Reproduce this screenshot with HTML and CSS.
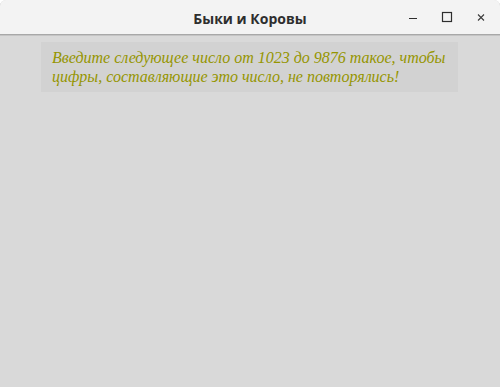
FILE: index.html
```html
<!DOCTYPE html>
<html lang="ru">
<head>
<meta charset="utf-8">
<title>Быки и Коровы</title>
<link rel="stylesheet" href="styles.css">
</head>
<body>
<div class="window">
  <header class="titlebar">
    <div class="title">Быки и Коровы</div>
    <div class="controls">
      <span class="btn"><svg width="12" height="12" viewBox="0 0 12 12"><path d="M2 7.5h8" stroke="#2e2e2e" stroke-width="1"/></svg></span>
      <span class="btn"><svg width="12" height="12" viewBox="0 0 12 12"><rect x="1.5" y="1.5" width="9" height="9" fill="none" stroke="#2e2e2e" stroke-width="1.2"/></svg></span>
      <span class="btn"><svg width="12" height="12" viewBox="0 0 12 12"><path d="M3 3.5l6 6M9 3.5l-6 6" stroke="#3a3a3a" stroke-width="1.1"/></svg></span>
    </div>
  </header>
  <main class="content">
    <div class="prompt">Введите следующее число от 1023 до 9876 такое, чтобы цифры, составляющие это число, не повторялись!</div>
  </main>
</div>
</body>
</html>
```
FILE: styles.css
```css
html, body {
  margin: 0;
  padding: 0;
  width: 500px;
  height: 387px;
  overflow: hidden;
  background: #ffffff;
}
.window {
  width: 500px;
  height: 387px;
  display: flex;
  flex-direction: column;
  background: #d9d9d9;
  border-radius: 6px 6px 0 0;
  overflow: hidden;
}
.titlebar {
  height: 34px;
  flex: none;
  background: #f3f3f3;
  border-bottom: 1px solid #a8a8a8;
  box-shadow: 0 1px 0 #c4c4c4;
  position: relative;
  display: flex;
  align-items: center;
  justify-content: center;
}
.title {
  font-family: "Open Sans", "Noto Sans", sans-serif;
  font-weight: 700;
  font-size: 14px;
  color: #2e2e2e;
  margin-top: 2px;
}
.controls {
  position: absolute;
  right: 0;
  top: 0;
  height: 34px;
  padding-right: 2px;
  display: flex;
  align-items: center;
}
.btn {
  width: 34px;
  height: 34px;
  display: flex;
  align-items: center;
  justify-content: center;
}
.content {
  flex: 1;
  padding: 7px 42px 0 41px;
}
.prompt {
  background: #d2d2d2;
  color: #959500;
  font-family: "Liberation Serif", "DejaVu Serif", serif;
  font-style: italic;
  font-size: 16px;
  line-height: 19px;
  padding: 6px 4px 6px 11px;
}
```
